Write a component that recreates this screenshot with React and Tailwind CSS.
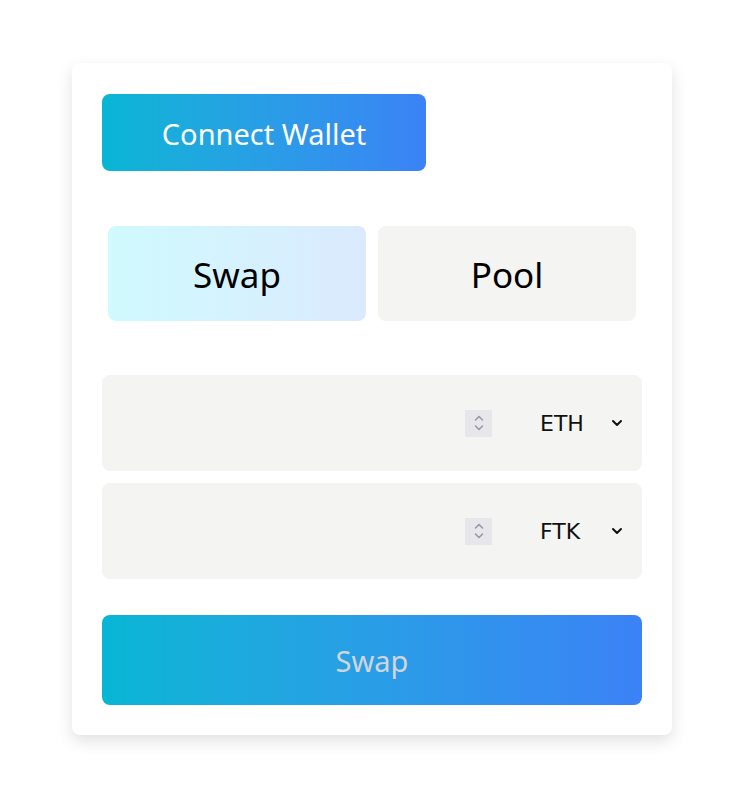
import { useState } from "react";

const Spinner = () => (
    <div className="w-[27px] h-[27px] bg-[#e6e6eb] flex items-center justify-center">
        <svg width="12" height="20" viewBox="0 0 12 20" fill="none" stroke="#9a9aa6" strokeWidth="1.6" strokeLinecap="round" strokeLinejoin="round">
            <path d="M2.5 7 L6 3.5 L9.5 7" />
            <path d="M2.5 13 L6 16.5 L9.5 13" />
        </svg>
    </div>
);

const Chevron = () => (
    <svg width="14" height="14" viewBox="0 0 14 14" fill="none" stroke="#111" strokeWidth="2" strokeLinecap="round" strokeLinejoin="round">
        <path d="M3 5 L7 9 L11 5" />
    </svg>
);

const TokenRow = ({ token }) => (
    <div className="h-[96px] rounded-lg bg-[#f4f4f3] flex items-center pl-[24px]">
        <div className="flex-1" />
        <Spinner />
        <div className="w-[150px] flex items-center pl-[48px] pr-[18px] justify-between">
            <span className="text-[22px] text-[#111] font-['DejaVu_Sans',sans-serif]">{token}</span>
            <Chevron />
        </div>
    </div>
);

export default function App() {
    const [tab, setTab] = useState("swap");

    return (
        <div className="min-h-screen bg-white flex items-start justify-center pt-[63px] font-['Noto_Sans',sans-serif]">
            <div className="w-[600px] ml-[3px] rounded-lg bg-white shadow-[0_6px_16px_rgba(0,0,0,0.12)] px-[30px] pt-[31px] pb-[30px] flex flex-col">
                {/* Connect wallet */}
                <button className="w-[324px] h-[77px] rounded-lg bg-gradient-to-r from-[#06b6d4] to-[#3b82f6] text-white text-[29px] pt-[2px]">
                    Connect Wallet
                </button>

                {/* Tabs */}
                <div className="mt-[55px] px-[6px] grid grid-cols-2 gap-[12px]">
                    <button
                        onClick={() => setTab("swap")}
                        className={`h-[95px] rounded-lg text-[35px] text-black pt-[4px] ${tab === "swap" ? "bg-gradient-to-r from-[#cffafe] to-[#dbeafe]" : "bg-[#f4f4f3]"}`}
                    >
                        Swap
                    </button>
                    <button
                        onClick={() => setTab("pool")}
                        className={`h-[95px] rounded-lg text-[35px] text-black pt-[4px] ${tab === "pool" ? "bg-gradient-to-r from-[#cffafe] to-[#dbeafe]" : "bg-[#f4f4f3]"}`}
                    >
                        Pool
                    </button>
                </div>

                {/* Inputs */}
                <div className="mt-[54px] flex flex-col gap-[12px]">
                    <TokenRow token="ETH" />
                    <TokenRow token="FTK" />
                </div>

                <button className="mt-[36px] h-[90px] rounded-lg bg-gradient-to-r from-[#06b6d4] to-[#3b82f6] text-[#d1d5db] text-[29px] pt-[2px]">
                    Swap
                </button>
            </div>
        </div>
    );
}
